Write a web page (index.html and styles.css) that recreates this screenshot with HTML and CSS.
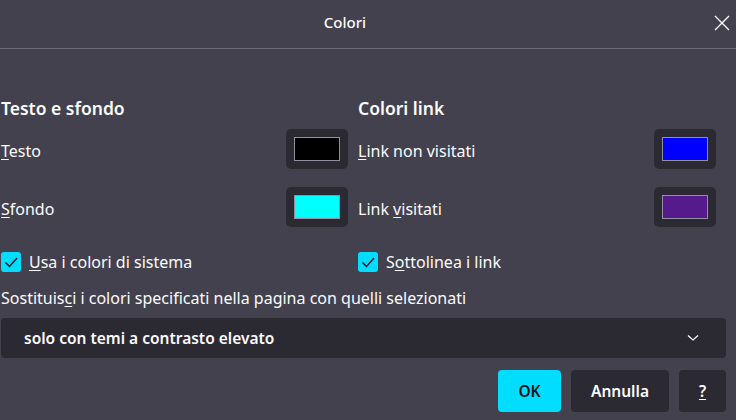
FILE: index.html
```html
<html>
<head>
<title>Colori</title>
<link rel="stylesheet" href="styles.css">
</head>
<body>
<div id="titleBar">
	<div class="title">Colori</div>
	<svg class="close" width="16" height="16" viewBox="0 0 16 16"><path d="M1 1 L15 15 M15 1 L1 15" stroke="#fbfbfe" stroke-width="1.4" fill="none"/></svg>
</div>

<div id="content">
	<div class="columns">
		<div class="group">
			<h2>Testo e sfondo</h2>
			<div class="row">
				<span><u>T</u>esto</span>
				<div class="swatch"><div class="color black"></div></div>
			</div>
			<div class="row">
				<span><u>S</u>fondo</span>
				<div class="swatch"><div class="color cyan"></div></div>
			</div>
		</div>
		<div class="group">
			<h2>Colori link</h2>
			<div class="row">
				<span><u>L</u>ink non visitati</span>
				<div class="swatch"><div class="color blue"></div></div>
			</div>
			<div class="row">
				<span>Link <u>v</u>isitati</span>
				<div class="swatch"><div class="color purple"></div></div>
			</div>
		</div>
		<label class="check"><span class="box"><svg width="20" height="20" viewBox="0 0 20 20"><path d="M4.5 10.5 L8.5 14.5 L16 6" stroke="#15141a" stroke-width="1.5" fill="none"/></svg></span><u>U</u>sa i colori di sistema</label>
		<label class="check"><span class="box"><svg width="20" height="20" viewBox="0 0 20 20"><path d="M4.5 10.5 L8.5 14.5 L16 6" stroke="#15141a" stroke-width="1.5" fill="none"/></svg></span>S<u>o</u>ttolinea i link</label>
	</div>

	<div class="override">Sostituis<u>c</u>i i colori specificati nella pagina con quelli selezionati</div>

	<div class="dropdown">
		<span>solo con temi a contrasto elevato</span>
		<svg width="12" height="8" viewBox="0 0 12 8"><path d="M1 1.5 L6 6 L11 1.5" stroke="#fbfbfe" stroke-width="1.3" fill="none"/></svg>
	</div>

	<div class="buttons">
		<div class="btn primary">OK</div>
		<div class="btn annulla">Annulla</div>
		<div class="btn help"><u>?</u></div>
	</div>
</div>
</body>
</html>
```

FILE: styles.css
```css
body {
	margin: 0;
	background-color: #42414d;
	color: #fbfbfe;
	font: 16px 'Noto Sans', sans-serif;
}
u {
	text-underline-offset: 2px;
}
#titleBar {
	height: 48px;
	border-bottom: 1px solid #6b6a75;
	display: flex;
	align-items: center;
	justify-content: center;
	position: relative;
}
#titleBar .title {
	font-size: 15px;
	font-weight: 500;
	margin-left: -46px;
	margin-top: -4px;
}
#titleBar .close {
	position: absolute;
	right: 6px;
	top: 15px;
}
#content {
	padding: 48px 10px 0 1px;
}
.columns {
	display: grid;
	grid-template-columns: 347px 358px;
	column-gap: 10px;
}
h2 {
	margin: 0;
	font-size: 17.5px;
	font-weight: 600;
	line-height: 22px;
}
.row {
	display: flex;
	justify-content: space-between;
	align-items: center;
	height: 40px;
	margin-top: 10px;
}
.row span {
	padding-top: 3px;
}
.row + .row {
	margin-top: 18px;
}
.swatch {
	width: 62px;
	height: 40px;
	background-color: #2b2a33;
	border-radius: 5px;
	display: flex;
	align-items: center;
	justify-content: center;
}
.color {
	width: 44px;
	height: 22px;
	border: 1px solid #8f8f9d;
}
.black { background-color: #000000; }
.cyan { background-color: #00ffff; }
.blue { background-color: #0000ff; }
.purple { background-color: #551a8b; }
.check {
	display: flex;
	align-items: center;
	margin-top: 24px;
	height: 21px;
}
.check .box {
	width: 20px;
	height: 20px;
	border-radius: 3px;
	background-color: #00ddff;
	margin-right: 8px;
	display: flex;
}
.override {
	margin-top: 15px;
	line-height: 22px;
}
.dropdown {
	margin-top: 9px;
	height: 40px;
	background-color: #2b2a33;
	border-radius: 4px;
	display: flex;
	align-items: center;
	justify-content: space-between;
	padding: 0 27px 0 23px;
	font-size: 15.5px;
	font-weight: 600;
}
.buttons {
	display: flex;
	justify-content: flex-end;
	gap: 10px;
	margin-top: 12px;
}
.btn {
	height: 42px;
	border-radius: 4px;
	background-color: #2b2a33;
	display: flex;
	align-items: center;
	justify-content: center;
	font-size: 15.5px;
	font-weight: 600;
}
.primary {
	width: 63px;
	background-color: #00ddff;
	color: #15141a;
}
.annulla {
	width: 98px;
}
.help {
	width: 47px;
}
```
